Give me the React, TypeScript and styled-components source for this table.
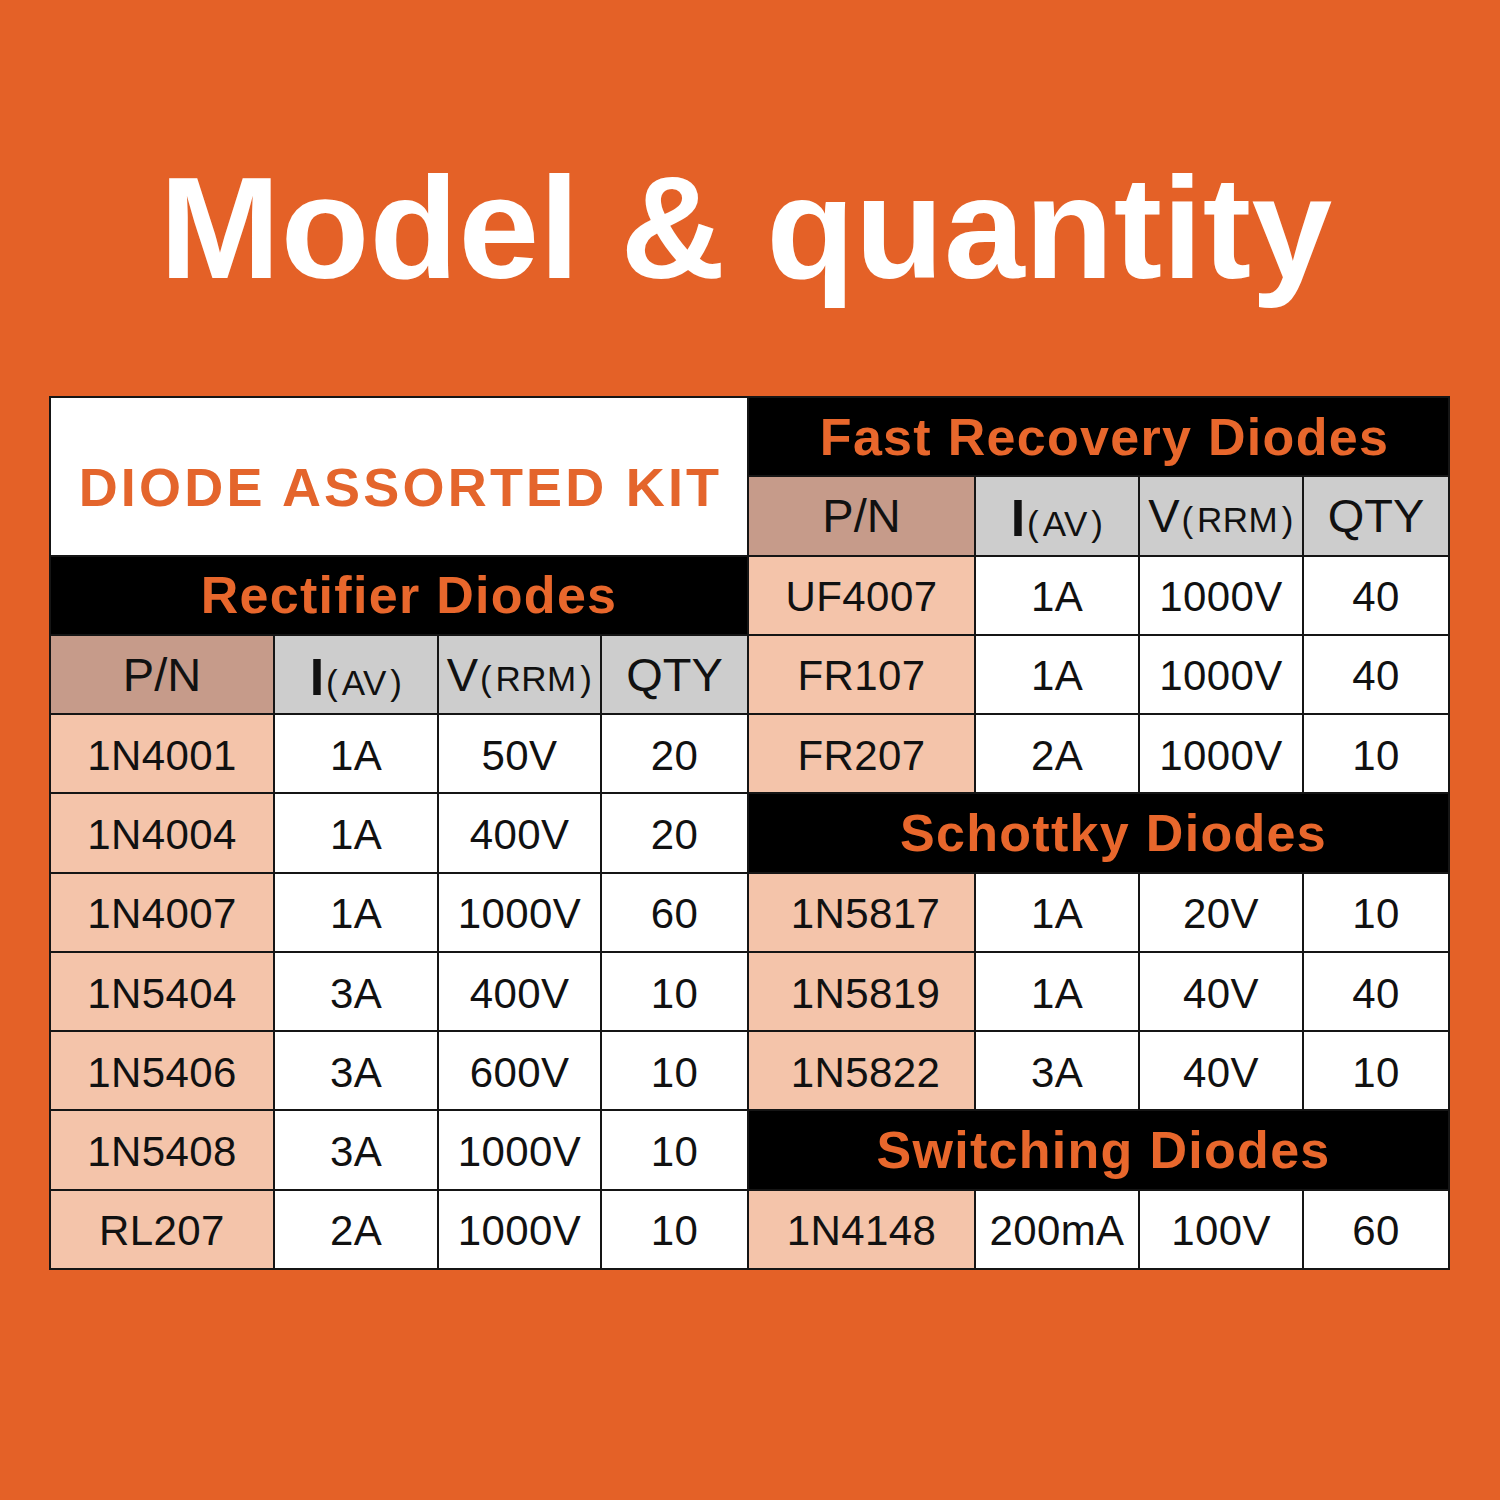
import React from "react";
import styled, { createGlobalStyle } from "styled-components";

const Global = createGlobalStyle`
  html, body { margin: 0; padding: 0; }
  body { background: #E46127; font-family: "Liberation Sans", Arial, sans-serif; }
`;

const Page = styled.div`
  width: 1500px;
  height: 1500px;
  background: #E46127;
  display: flex;
  flex-direction: column;
  align-items: center;
  box-sizing: border-box;
  padding-top: 156px;
`;

const Title = styled.h1`
  margin: 0 0 95px 0;
  height: 145px;
  font-family: "Liberation Sans", Arial, sans-serif;
  font-weight: 700;
  font-size: 145px;
  line-height: 145px;
  color: #ffffff;
  letter-spacing: 0.3px;
  white-space: nowrap;
  padding-right: 8px;
`;

const Table = styled.div`
  width: 1401px;
  height: 874px;
  box-sizing: border-box;
  margin-left: -1px;
  background: #151515;
  padding: 2px;
  display: grid;
  grid-template-columns: 696px 699px;
  column-gap: 2px;
`;

const Panel = styled.div`
  display: grid;
  grid-template-rows: repeat(11, 1fr);
  row-gap: 2px;
  background: #151515;
`;

const KitCell = styled.div`
  grid-row: span 2;
  background: #ffffff;
  display: flex;
  align-items: center;
  justify-content: center;
  padding-top: 21px;
  padding-left: 3px;
  color: #E4652C;
  font-weight: 700;
  font-size: 54px;
  letter-spacing: 3.2px;
  white-space: nowrap;
`;

const Band = styled.div<{ $shift?: number }>`
  background: #000;
  display: flex;
  align-items: center;
  justify-content: center;
  color: #E8672C;
  font-weight: 700;
  font-size: 52px;
  letter-spacing: 1.3px;
  white-space: nowrap;
  padding-left: ${(p) => p.$shift ?? 0}px;
`;

const Row = styled.div<{ $cols: string }>`
  display: grid;
  grid-template-columns: ${(p) => p.$cols};
  column-gap: 2px;
`;

const HeadCell = styled.div<{ $pn?: boolean }>`
  background: ${(p) => (p.$pn ? "#C69B8A" : "#CDCDCD")};
  display: flex;
  align-items: baseline;
  justify-content: center;
  padding-top: 11px;
  box-sizing: border-box;
  color: #111;
  font-size: 47px;
  white-space: nowrap;
`;

const BigI = styled.span`
  font-weight: 700;
  font-size: 52px;
`;

const Sub = styled.span`
  font-size: 35px;
  letter-spacing: 0.5px;
  white-space: pre;
  padding-left: 2px;
`;

const Cell = styled.div<{ $pn?: boolean; $nudge?: number }>`
  background: ${(p) => (p.$pn ? "#F4C4AA" : "#ffffff")};
  display: flex;
  align-items: center;
  justify-content: center;
  padding-top: 4px;
  padding-left: ${(p) => p.$nudge ?? 0}px;
  box-sizing: border-box;
  color: #111;
  font-size: 42px;
  letter-spacing: 0.4px;
  white-space: nowrap;
`;

const LEFT_COLS = "222px 162px 161px 145px";
const RIGHT_COLS = "225px 162px 162px 144px";

type R = [string, string, string, string];

const rectifier: R[] = [
  ["1N4001", "1A", "50V", "20"],
  ["1N4004", "1A", "400V", "20"],
  ["1N4007", "1A", "1000V", "60"],
  ["1N5404", "3A", "400V", "10"],
  ["1N5406", "3A", "600V", "10"],
  ["1N5408", "3A", "1000V", "10"],
  ["RL207", "2A", "1000V", "10"],
];

const fast: R[] = [
  ["UF4007", "1A", "1000V", "40"],
  ["FR107", "1A", "1000V", "40"],
  ["FR207", "2A", "1000V", "10"],
];

const schottky: R[] = [
  ["1N5817", "1A", "20V", "10"],
  ["1N5819", "1A", "40V", "40"],
  ["1N5822", "3A", "40V", "10"],
];

const switching: R[] = [["1N4148", "200mA", "100V", "60"]];

const Header = ({ cols }: { cols: string }) => (
  <Row $cols={cols}>
    <HeadCell $pn>P/N</HeadCell>
    <HeadCell>
      <BigI>I</BigI>
      <Sub>{"(\u200AAV\u200A)"}</Sub>
    </HeadCell>
    <HeadCell>
      V<Sub>{"(\u200ARRM\u200A)"}</Sub>
    </HeadCell>
    <HeadCell>QTY</HeadCell>
  </Row>
);

const DataRows = ({ rows, cols, nudge }: { rows: R[]; cols: string; nudge?: number }) => (
  <>
    {rows.map((r) => (
      <Row key={r[0]} $cols={cols}>
        <Cell $pn $nudge={nudge}>{r[0]}</Cell>
        <Cell>{r[1]}</Cell>
        <Cell>{r[2]}</Cell>
        <Cell>{r[3]}</Cell>
      </Row>
    ))}
  </>
);

export default function App() {
  return (
    <Page>
      <Global />
      <Title>Model &amp; quantity</Title>
      <Table>
        <Panel>
          <KitCell>DIODE ASSORTED KIT</KitCell>
          <Band $shift={20}>Rectifier Diodes</Band>
          <Header cols={LEFT_COLS} />
          <DataRows rows={rectifier} cols={LEFT_COLS} />
        </Panel>
        <Panel>
          <Band $shift={12}>Fast Recovery Diodes</Band>
          <Header cols={RIGHT_COLS} />
          <DataRows rows={fast} cols={RIGHT_COLS} />
          <Band $shift={30}>Schottky Diodes</Band>
          <DataRows rows={schottky} cols={RIGHT_COLS} nudge={8} />
          <Band $shift={10}>Switching Diodes</Band>
          <DataRows rows={switching} cols={RIGHT_COLS} />
        </Panel>
      </Table>
    </Page>
  );
}
